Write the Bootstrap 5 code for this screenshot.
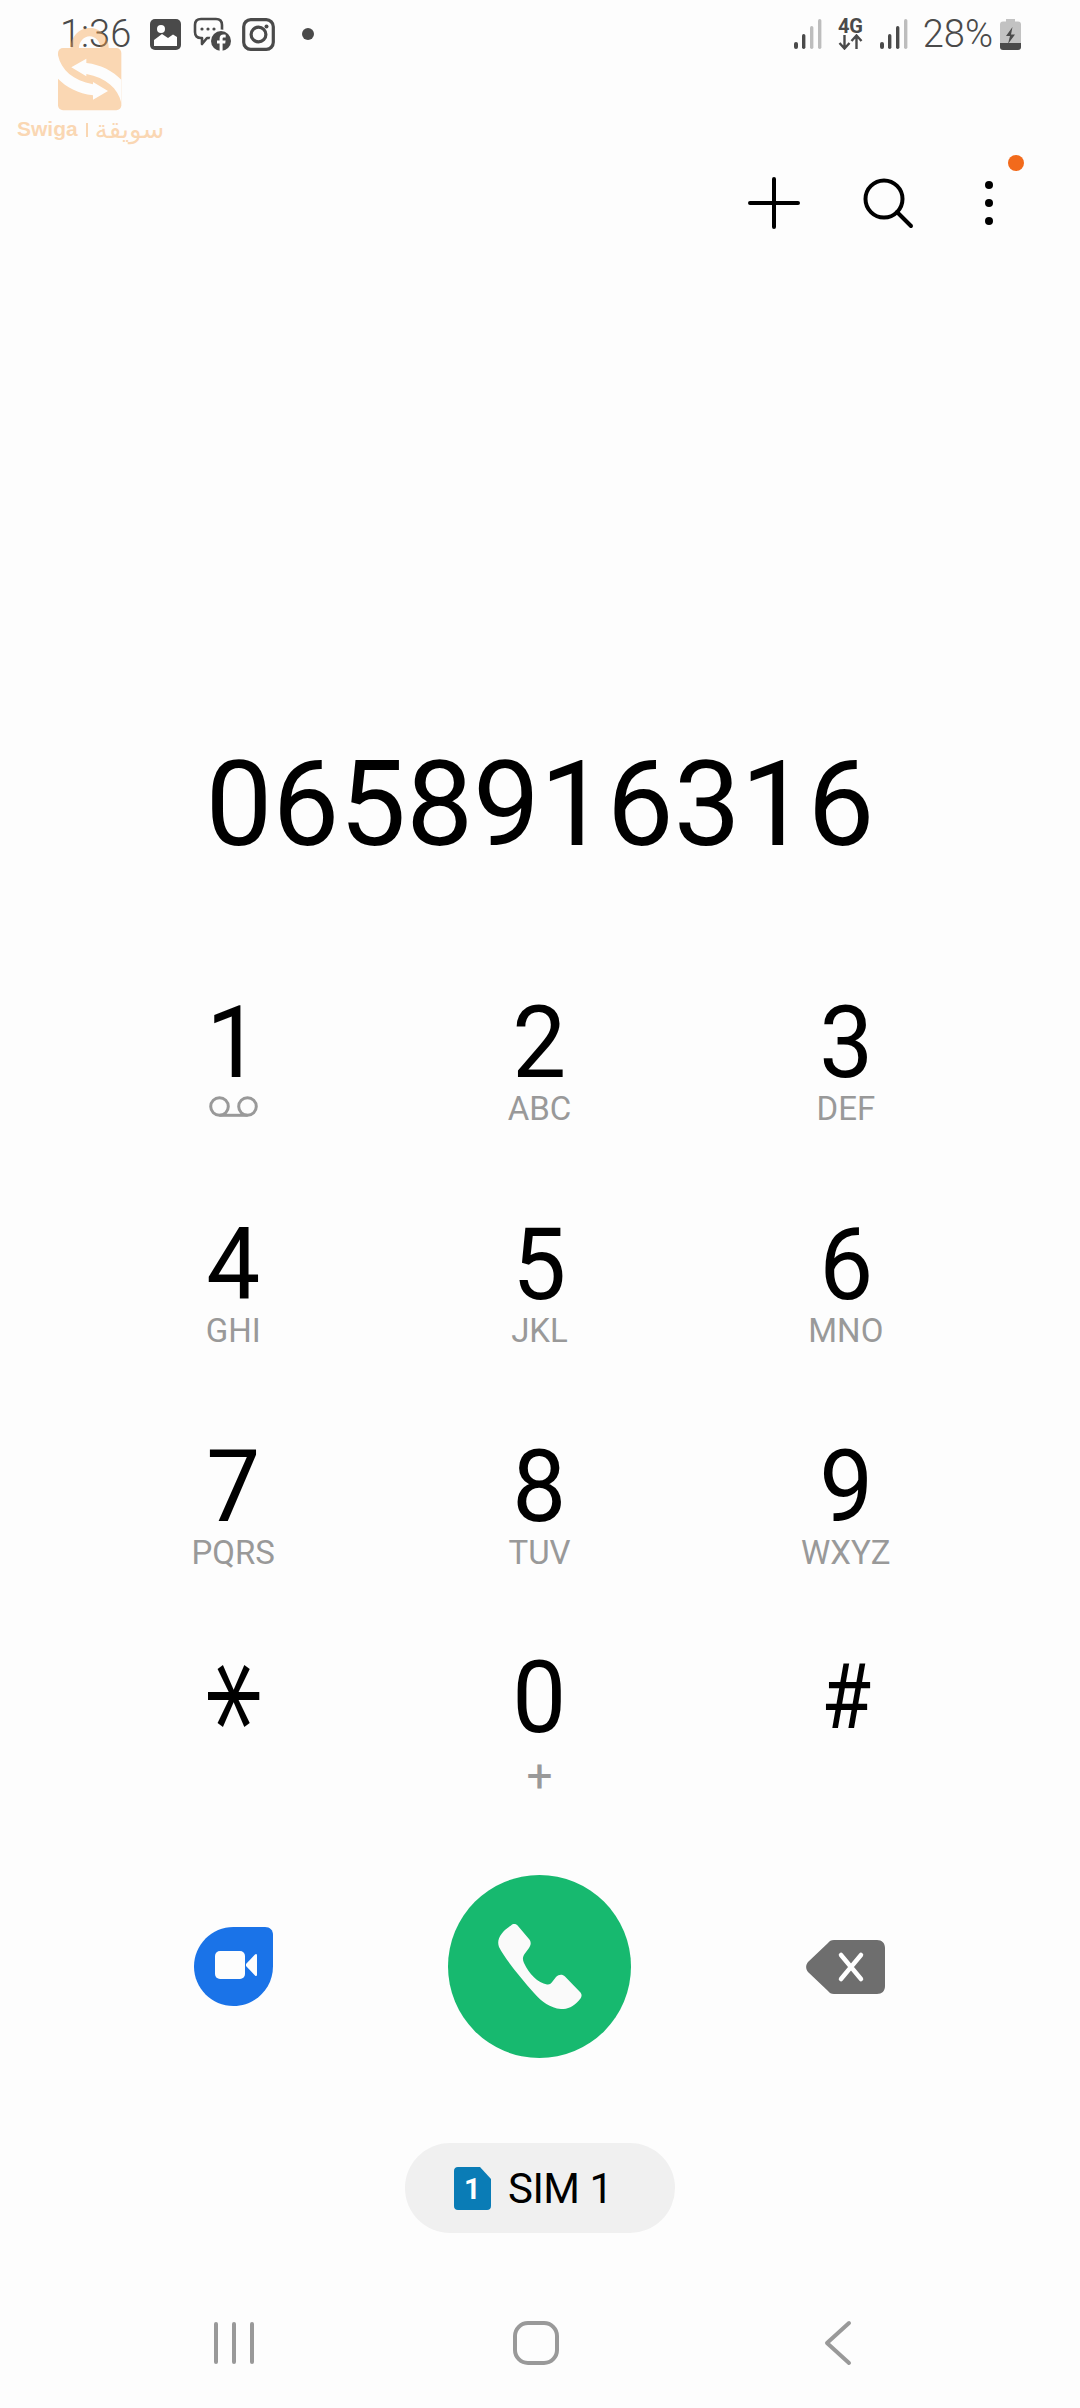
<!DOCTYPE html>
<html lang="en">
<head>
    <meta charset="UTF-8">
    <meta name="viewport" content="width=device-width, initial-scale=1.0">
    <title>Phone</title>
    <link href="https://cdn.jsdelivr.net/npm/bootstrap@5.3.0/dist/css/bootstrap.min.css" rel="stylesheet">
    <style>
        body {
            background-color: #fdfdfd;
            font-family: Roboto, "Liberation Sans", sans-serif;
            color: #000;
            width: 1080px;
            height: 2408px;
            overflow: hidden;
        }
        .phone-screen {
            position: relative;
            height: 2408px;
        }
        .status-bar {
            height: 68px;
            padding: 0 59px 0 60px;
            color: #4a4a4a;
        }
        .status-text {
            font-size: 38px;
            font-weight: 300;
            line-height: 1;
        }
        .st-gallery { margin-left: 19px; }
        .st-chat { margin-left: 12px; }
        .st-insta { margin-left: 10px; }
        .st-dot { margin-left: 27px; }
        .st-lte { margin-left: 16px; margin-right: 17px; width: 25px; }
        .st-lte-text {
            font-size: 20px;
            font-weight: 700;
            line-height: 15px;
            letter-spacing: -0.3px;
        }
        .st-pct { margin-left: 15px; margin-right: 7px; }
        .top-actions {
            height: 270px;
            padding-right: 83px;
        }
        .act-plus { margin-right: 62px; }
        .act-search { margin-right: 67px; }
        .act-menu { position: relative; }
        .act-badge {
            position: absolute;
            width: 16px;
            height: 16px;
            left: 27px;
            top: -22px;
            border-radius: 50%;
            background-color: #f26a1b;
        }
        .dialed-number {
            margin-top: 407px;
            font-size: 119px;
            line-height: 120px;
            text-align: center;
        }
        .keypad {
            margin-top: 128px;
            padding: 0 81px 0 80px;
        }
        .dial-row { height: 222px; }
        .dial-row-short { height: 211px; }
        .dial-row-last { height: 227px; }
        .dial-digit {
            font-size: 100px;
            line-height: 100px;
            text-align: center;
            transform: scaleX(.96);
        }
        .dial-letters {
            font-size: 33px;
            line-height: 32px;
            color: #999;
            text-align: center;
        }
        .dial-voicemail {
            display: block;
            margin: 3px auto 0;
        }
        .dial-plus {
            font-size: 46px;
            line-height: 56px;
            color: #999;
            text-align: center;
        }
        .dial-star {
            font-family: "DejaVu Sans", sans-serif;
            transform: translate(-19px, -2px) rotate(90deg) scale(1.41, 1.12);
        }
        .dial-hash {
            font-size: 90px;
            transform: scaleX(.9);
        }
        .call-btn {
            width: 183px;
            height: 183px;
            padding: 0;
            border: 0;
            background-color: #17b96f;
        }
        .call-row { height: 183px; }
        .sim-pill {
            width: 270px;
            height: 90px;
            margin: 85px auto 0;
            padding-left: 49px;
            gap: 17px;
            background-color: #f0f0f0;
            font-size: 42px;
            letter-spacing: -0.5px;
        }
        .nav-keys {
            margin-top: 87px;
            padding-left: 83px;
        }
        .nav-cell { width: 302px; }
        .logo-stamp {
            position: absolute;
            left: 17px;
            top: 28px;
            width: 148px;
            opacity: .4;
            color: #f8a046;
        }
        .logo-stamp svg { margin-left: 41px; }
        .logo-name {
            margin-top: 5px;
            line-height: 24px;
            font-family: "Liberation Sans", "DejaVu Sans", sans-serif;
            font-size: 21px;
            font-weight: 700;
            white-space: nowrap;
        }
        .logo-bar { width: 2px; height: 14px; margin: 2px 7px 0 8px; background-color: #f8a046; }
        .logo-ar { font-family: "DejaVu Sans", sans-serif; font-weight: 400; font-size: 26px; }
    </style>
</head>
<body>
<div class="phone-screen">
    <div class="status-bar d-flex align-items-center">
        <span class="status-text">1:36</span>
        <svg class="st-gallery" width="31" height="31" viewBox="0 0 31 31">
            <rect width="31" height="31" rx="5" fill="#4a4a4a"/>
            <circle cx="11" cy="10" r="4" fill="#fff"/>
            <path d="M4 21L12 15L18 19L23 15.5L27 18V27H4Z" fill="#fff"/>
        </svg>
        <svg class="st-chat" width="39" height="35" viewBox="0 0 39 35">
            <path d="M8 2H23C27 2 29 4 29 8V15C29 19 27 21 23 21H14L9 27V21H8C4 21 2 19 2 15V8C2 4 4 2 8 2Z" fill="none" stroke="#4a4a4a" stroke-width="2.6" stroke-linejoin="round"/>
            <circle cx="9" cy="12" r="1.6" fill="#4a4a4a"/>
            <circle cx="15" cy="12" r="1.6" fill="#4a4a4a"/>
            <circle cx="21" cy="12" r="1.6" fill="#4a4a4a"/>
            <circle cx="28" cy="24" r="11.5" fill="#fdfdfd"/>
            <circle cx="28" cy="24" r="10" fill="#4a4a4a"/>
            <path d="M29.6 34V26.5H32.2L32.6 23.5H29.6V21.8C29.6 20.9 30 20.4 31 20.4H32.7V17.8C32 17.7 31.2 17.6 30.4 17.6C28 17.6 26.6 19 26.6 21.4V23.5H24V26.5H26.6V34Z" fill="#fff"/>
        </svg>
        <svg class="st-insta" width="33" height="33" viewBox="0 0 33 33">
            <rect x="1.7" y="1.7" width="29.6" height="29.6" rx="7" fill="none" stroke="#4a4a4a" stroke-width="3.2"/>
            <circle cx="16.5" cy="16.5" r="7.4" fill="none" stroke="#4a4a4a" stroke-width="3.2"/>
            <circle cx="24.5" cy="8.5" r="2" fill="#4a4a4a"/>
        </svg>
        <svg class="st-dot" width="12" height="12" viewBox="0 0 12 12"><circle cx="6" cy="6" r="6" fill="#4a4a4a"/></svg>
        <svg class="ms-auto" width="28" height="30" viewBox="0 0 28 30">
            <rect x="0" y="23" width="4" height="7" rx="2" fill="#4a4a4a"/>
            <rect x="8" y="15" width="3.4" height="15" rx="1.7" fill="#4a4a4a"/>
            <rect x="16" y="7" width="3.4" height="23" rx="1.7" fill="#bdbdbd"/>
            <rect x="24" y="0" width="3.4" height="30" rx="1.7" fill="#bdbdbd"/>
        </svg>
        <div class="st-lte d-flex flex-column align-items-center">
            <span class="st-lte-text">4G</span>
            <svg width="25" height="16" viewBox="0 0 25 16">
                <path d="M6.5 1V14M1.5 9L6.5 14.500L11.500 9M18.500 15V2M13.500 7L18.500 1.500L23.500 7" fill="none" stroke="#4a4a4a" stroke-width="2.4"/>
            </svg>
        </div>
        <svg width="28" height="30" viewBox="0 0 28 30">
            <rect x="0" y="23" width="4" height="7" rx="2" fill="#4a4a4a"/>
            <rect x="8" y="15" width="3.4" height="15" rx="1.7" fill="#4a4a4a"/>
            <rect x="16" y="7" width="3.4" height="23" rx="1.7" fill="#4a4a4a"/>
            <rect x="24" y="0" width="3.4" height="30" rx="1.7" fill="#bdbdbd"/>
        </svg>
        <span class="status-text st-pct">28%</span>
        <svg width="21" height="31" viewBox="0 0 21 31">
            <path d="M6 0H15V2.500H18C20 2.500 21 3.500 21 5.500V24H0V5.500C0 3.500 1 2.500 3 2.500H6Z" fill="#c2c2c2"/>
            <path d="M0 24H21V28C21 30 20 31 18 31H3C1 31 0 30 0 28Z" fill="#4a4a4a"/>
            <path d="M12.500 8L6 17H10L8 25L15 15.500H11Z" fill="#4a4a4a"/>
        </svg>
    </div>

    <div class="top-actions d-flex justify-content-end align-items-center">
        <svg class="act-plus" width="52" height="52" viewBox="0 0 52 52">
            <path d="M26 2V50M2 26H50" stroke="#000" stroke-width="4" stroke-linecap="round"/>
        </svg>
        <svg class="act-search" width="52" height="52" viewBox="0 0 52 52">
            <circle cx="22" cy="22" r="18.500" fill="none" stroke="#000" stroke-width="4"/>
            <path d="M35 35L49 49" stroke="#000" stroke-width="4" stroke-linecap="round"/>
        </svg>
        <div class="act-menu">
            <svg class="d-block" width="16" height="52" viewBox="0 0 16 52">
                <circle cx="8" cy="8" r="4" fill="#000"/>
                <circle cx="8" cy="26" r="4" fill="#000"/>
                <circle cx="8" cy="44" r="4" fill="#000"/>
            </svg>
            <span class="act-badge"></span>
        </div>
    </div>

    <div class="dialed-number">0658916316</div>

    <div class="keypad">
        <div class="row g-0 dial-row">
            <div class="col-4">
                <div class="dial-digit">1</div>
                <svg class="dial-voicemail" width="49" height="21" viewBox="0 0 49 21">
                    <circle cx="10.500" cy="10.500" r="8.800" fill="none" stroke="#999" stroke-width="3"/>
                    <circle cx="38.500" cy="10.500" r="8.800" fill="none" stroke="#999" stroke-width="3"/>
                    <path d="M10.500 19.300H38.500" stroke="#999" stroke-width="3"/>
                </svg>
            </div>
            <div class="col-4"><div class="dial-digit">2</div><div class="dial-letters">ABC</div></div>
            <div class="col-4"><div class="dial-digit">3</div><div class="dial-letters">DEF</div></div>
        </div>
        <div class="row g-0 dial-row">
            <div class="col-4"><div class="dial-digit">4</div><div class="dial-letters">GHI</div></div>
            <div class="col-4"><div class="dial-digit">5</div><div class="dial-letters">JKL</div></div>
            <div class="col-4"><div class="dial-digit">6</div><div class="dial-letters">MNO</div></div>
        </div>
        <div class="row g-0 dial-row-short">
            <div class="col-4"><div class="dial-digit">7</div><div class="dial-letters">PQRS</div></div>
            <div class="col-4"><div class="dial-digit">8</div><div class="dial-letters">TUV</div></div>
            <div class="col-4"><div class="dial-digit">9</div><div class="dial-letters">WXYZ</div></div>
        </div>
        <div class="row g-0 dial-row-last">
            <div class="col-4"><div class="dial-digit dial-star">*</div></div>
            <div class="col-4"><div class="dial-digit">0</div><div class="dial-plus">+</div></div>
            <div class="col-4"><div class="dial-digit dial-hash">#</div></div>
        </div>
        <div class="row g-0 call-row align-items-center">
            <div class="col-4 d-flex justify-content-center">
                <svg width="79" height="79" viewBox="0 0 79 79">
                    <path d="M39.500 79C17.700 79 0 61.300 0 39.500C0 17.700 17.700 0 39.500 0H71C76 0 79 3 79 8V39.500C79 61.300 61.300 79 39.500 79Z" fill="#1a73e8"/>
                    <rect x="21" y="24" width="30" height="28" rx="5" fill="#fdfdfd"/>
                    <path d="M52 37L61 27.500C62 26.500 63 27 63 28.500V47.500C63 49 62 49.500 61 48.500L52 39Z" fill="#fdfdfd"/>
                </svg>
            </div>
            <div class="col-4 d-flex justify-content-center">
                <button type="button" class="btn rounded-circle call-btn d-flex align-items-center justify-content-center">
                    <svg width="85" height="85" viewBox="0 0 85 85">
                        <path d="M14 1.500C16 -.5 19 -.5 21 2L32 15C34.500 18 34 21 32 24L27.500 30C25.500 33 25.500 36 27 39C32 50 41 59 50 60.500C52.500 61 54 59.500 55.500 57.500L59 53C62 50 65.500 50 68 52.500L83 68C85 70 85 72.500 83.500 74.500C78 82 71 85.500 64 85C53 84 45 78 37 69C24 54 8 35 2 23C-1 15 5 7 14 1.500Z" fill="#fafafa"/>
                    </svg>
                </button>
            </div>
            <div class="col-4 d-flex justify-content-center">
                <svg width="79" height="54" viewBox="0 0 79 54">
                    <path d="M28 0H71C76 0 79 3 79 8V46C79 51 76 54 71 54H28C25 54 23.500 53 22 51L2 32C-.5 29 -.5 25 2 22L22 3C23.500 1 25 0 28 0Z" fill="#6e6e6e"/>
                    <path d="M35 15L55 39M55 15L35 39" stroke="#fff" stroke-width="4.500" stroke-linecap="round"/>
                </svg>
            </div>
        </div>
    </div>

    <div class="sim-pill rounded-pill d-flex align-items-center">
        <svg width="37" height="43" viewBox="0 0 37 43">
            <path d="M4 0H26L37 12V39C37 41.500 35.500 43 33 43H4C1.500 43 0 41.500 0 39V4C0 1.500 1.500 0 4 0Z" fill="#0a7cb6"/>
            <text x="18" y="32" font-family="Roboto" font-size="29" font-weight="700" fill="#fff" text-anchor="middle">1</text>
        </svg>
        <span>SIM 1</span>
    </div>

    <div class="nav-keys d-flex align-items-center">
        <div class="nav-cell d-flex justify-content-center">
            <svg width="40" height="44" viewBox="0 0 40 44">
                <path d="M2 3V41M20 3V41M38 3V41" stroke="#999" stroke-width="4" stroke-linecap="round"/>
            </svg>
        </div>
        <div class="nav-cell d-flex justify-content-center">
            <svg width="46" height="44" viewBox="0 0 46 44">
                <rect x="2" y="2" width="42" height="40" rx="13" fill="none" stroke="#999" stroke-width="4"/>
            </svg>
        </div>
        <div class="nav-cell d-flex justify-content-center">
            <svg width="28" height="46" viewBox="0 0 28 46">
                <path d="M25 3L3 23L25 43" fill="none" stroke="#999" stroke-width="4" stroke-linecap="round" stroke-linejoin="round"/>
            </svg>
        </div>
    </div>

    <div class="logo-stamp">
        <svg class="d-block" width="64" height="84" viewBox="145 43 192 252">
            <path d="M195 105A45 50 0 0 1 285 105" fill="none" stroke="#f8a046" stroke-width="25"/>
            <rect x="145" y="103" width="190" height="187" rx="15" fill="#f8a046"/>
            <g fill="#fff">
                <path d="M145 125C155 170 190 200 250 212V205L295 232L250 258V245C205 240 170 220 145 195Z"/>
                <path d="M145 125C155 170 190 200 250 212V205L295 232L250 258V245C205 240 170 220 145 195Z" transform="rotate(180 240 196.500)"/>
            </g>
        </svg>
        <div class="logo-name d-flex align-items-center">
            <span>Swiga</span><span class="logo-bar"></span><span class="logo-ar">سويقة</span>
        </div>
    </div>
</div>
<script src="https://cdn.jsdelivr.net/npm/bootstrap@5.3.0/dist/js/bootstrap.bundle.min.js"></script>
</body>
</html>
